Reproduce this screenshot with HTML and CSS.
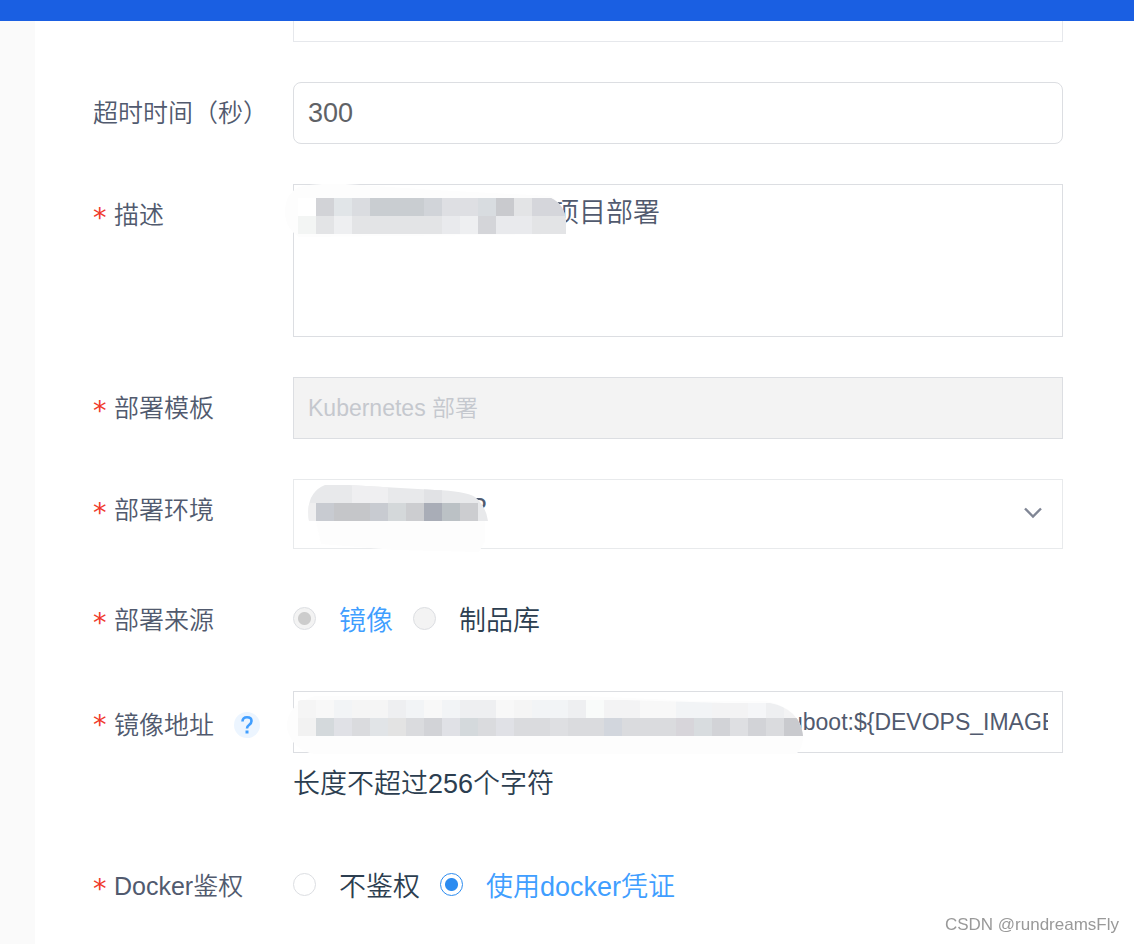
FILE: index.html
```html
<!DOCTYPE html>
<html lang="zh-CN">
<head>
<meta charset="utf-8">
<meta name="viewport" content="width=device-width, initial-scale=1">
<title>部署</title>
<link rel="stylesheet" href="styles.css">
</head>
<body>
<header class="topbar"></header>
<div class="shell">
  <aside class="side"></aside>
  <main class="content">
    <form class="form">
      <div class="cut-field"></div>

      <div class="row">
        <label class="label" for="timeout">超时时间（秒）</label>
        <div class="field"><input class="control rounded" id="timeout" type="text" value="300"></div>
      </div>

      <div class="row">
        <label class="label" for="desc"><span class="star">*</span>描述</label>
        <div class="field">
          <textarea class="control area" id="desc">项目部署</textarea>
          <svg class="mask" width="290" height="60" viewBox="0 0 290 60" aria-hidden="true">
            <clipPath id="c1"><path d="M12 14H266Q279 20 281 36V50H12Z"/></clipPath>
            <path fill="#fdfdfd" d="M14 3Q28 -1 60 0L150 6L266 12Q280 22 281 50L14 53Q0 44 0 28Q0 10 14 3Z"/>
            <g clip-path="url(#c1)" shape-rendering="crispEdges">
              <path fill="#e3e4e6" d="M13 14h270v36h-270z"/>
              <path fill="#fff" d="M13 14h18v18h-18z"/>
              <path fill="#d2d3d7" d="M31 14h18v18h-18z"/>
              <path fill="#e1e5e8" d="M49 14h18v18h-18z"/>
              <path fill="#dadce0" d="M67 14h18v18h-18z"/>
              <path fill="#c9cdd1" d="M85 14h54v18h-54z"/>
              <path fill="#d1d4d9" d="M139 14h18v18h-18z"/>
              <path fill="#dedfe3" d="M157 14h36v18h-36z"/>
              <path fill="#d8dce0" d="M193 14h18v18h-18z"/>
              <path fill="#c9cace" d="M211 14h18v18h-18z"/>
              <path fill="#d5d6db" d="M247 14h36v18h-36z"/>
              <path fill="#f3f5f4" d="M13 32h18v18h-18z"/>
              <path fill="#eeeff1" d="M49 32h18v18h-18zM175 32h18v18h-18z"/>
              <path fill="#e9eaed" d="M157 32h18v18h-18zM211 32h36v18h-36z"/>
              <path fill="#d4d5d9" d="M193 32h18v18h-18z"/>
            </g>
          </svg>
        </div>
      </div>

      <div class="row">
        <label class="label" for="tpl"><span class="star">*</span>部署模板</label>
        <div class="field"><input class="control small" id="tpl" type="text" value="Kubernetes 部署" disabled></div>
      </div>

      <div class="row">
        <label class="label" for="env"><span class="star">*</span>部署环境</label>
        <div class="field">
          <select class="control env" id="env"><option>P</option></select>
          <svg class="chevron" width="18" height="12" viewBox="0 0 18 12" aria-hidden="true"><path d="M1 1.5L9 9.500L17 1.500" fill="none" stroke="#808695" stroke-width="2.400"/></svg>
          <svg class="mask" width="210" height="75" viewBox="0 0 210 75" aria-hidden="true">
            <clipPath id="c2"><path d="M24 42Q20 14 40 6H64L150 11Q180 12 190 18Q201 27 203 42Z"/></clipPath>
            <path fill="#fdfdfd" d="M31 42H200V62L194 73L110 71L36 65Z"/>
            <g clip-path="url(#c2)" shape-rendering="crispEdges">
              <path fill="#e8e9eb" d="M20 4h190v40h-190z"/>
              <path fill="#efeff1" d="M67 4h36v20h-36z"/>
              <path fill="#e1e2e5" d="M139 4h18v20h-18z"/>
              <path fill="#efeff0" d="M20 24h11v18h-11z"/>
              <path fill="#c8cbd1" d="M31 24h18v18h-18zM85 24h18v18h-18z"/>
              <path fill="#c5c6c9" d="M49 24h36v18h-36z"/>
              <path fill="#d4d8da" d="M103 24h18v18h-18z"/>
              <path fill="#cccdd0" d="M121 24h18v18h-18zM175 24h18v18h-18z"/>
              <path fill="#a9adb7" d="M139 24h18v18h-18z"/>
              <path fill="#bbc1c5" d="M157 24h18v18h-18z"/>
            </g>
          </svg>
        </div>
      </div>

      <div class="row">
        <div class="label"><span class="star">*</span>部署来源</div>
        <div class="field radios">
          <label class="option on"><input type="radio" name="source" checked disabled>镜像</label>
          <label class="option"><input type="radio" name="source" disabled>制品库</label>
        </div>
      </div>

      <div class="row">
        <div class="label">
          <label for="image"><span class="star">*</span>镜像地址</label>
          <button class="help" type="button" aria-label="帮助"><svg width="14" height="20" viewBox="0 0 14 20" aria-hidden="true"><path d="M2.500 6.500Q2.500 2.300 7 2.300Q11.500 2.300 11.500 6Q11.500 8 9.300 9.800Q7 11.500 7 13.500" fill="none" stroke="#409eff" stroke-width="2.600"/><path d="M5.500 15.500h3v3h-3z" fill="#409eff"/></svg></button>
        </div>
        <div class="field">
          <input class="control small image" id="image" type="text" value="uboot:${DEVOPS_IMAGE}">
          <svg class="mask" width="520" height="66" viewBox="0 0 520 66" aria-hidden="true">
            <clipPath id="c3"><path d="M13 10L16 9H340L440 12H485Q515 18 518 45H13Z"/></clipPath>
            <path fill="#fdfdfd" d="M30 5H300L410 10H480Q515 16 518 45Q518 58 511 63H30Q8 60 2 38Q0 14 30 5Z"/>
            <g clip-path="url(#c3)" shape-rendering="crispEdges">
              <path fill="#f5f5f5" d="M13 9h18v18h-18zM67 9h36v18h-36zM229 9h18v18h-18z"/>
              <path fill="#f8f8f8" d="M31 9h18v18h-18zM139 9h18v18h-18zM211 9h18v18h-18zM355 9h36v18h-36z"/>
              <path fill="#f2f4f6" d="M49 9h18v18h-18zM121 9h18v18h-18zM157 9h18v18h-18zM247 9h36v18h-36zM391 9h36v18h-36z"/>
              <path fill="#eeeff1" d="M103 9h18v18h-18zM175 9h36v18h-36zM283 9h18v18h-18zM481 9h18v18h-18z"/>
              <path fill="#f9fbfa" d="M301 9h18v18h-18z"/>
              <path fill="#f3f3f4" d="M319 9h36v18h-36zM427 9h36v18h-36zM499 9h20v18h-20z"/>
              <path fill="#f5f6f8" d="M463 9h18v18h-18z"/>
              <path fill="#f2f2f2" d="M13 27h18v18h-18z"/>
              <path fill="#dadbde" d="M49 27h470v18h-470z"/>
              <path fill="#d4d9dc" d="M31 27h18v18h-18zM175 27h18v18h-18z"/>
              <path fill="#e0e1e6" d="M49 27h18v18h-18zM157 27h18v18h-18zM211 27h18v18h-18z"/>
              <path fill="#e1e4e7" d="M85 27h18v18h-18z"/>
              <path fill="#e3e3e3" d="M103 27h18v18h-18z"/>
              <path fill="#d2d3d7" d="M139 27h18v18h-18zM427 27h18v18h-18zM463 27h18v18h-18z"/>
              <path fill="#dedfe2" d="M265 27h18v18h-18zM445 27h18v18h-18z"/>
              <path fill="#d2d6dd" d="M319 27h18v18h-18z"/>
              <path fill="#d7d5da" d="M391 27h18v18h-18z"/>
              <path fill="#d8dcdf" d="M409 27h18v18h-18z"/>
              <path fill="#c9cace" d="M499 27h20v18h-20z"/>
            </g>
          </svg>
          <p class="hint">长度不超过256个字符</p>
        </div>
      </div>

      <div class="row">
        <div class="label"><span class="star">*</span>Docker鉴权</div>
        <div class="field radios">
          <label class="option"><input type="radio" name="auth">不鉴权</label>
          <label class="option on"><input type="radio" name="auth" checked>使用docker凭证</label>
        </div>
      </div>
    </form>
  </main>
</div>
<div class="watermark">CSDN @rundreamsFly</div>
</body>
</html>
```
FILE: styles.css
```css
* { box-sizing: border-box; }

body {
  margin: 0;
  min-height: 100vh;
  display: flex;
  flex-direction: column;
  background: #fff;
  color: #2c3e50;
  font-family: "Liberation Sans", "Noto Sans CJK SC", sans-serif;
  font-size: 27px;
  font-weight: 350;
}

.topbar { height: 21px; background: #1a5fe2; }

.shell { display: flex; flex: 1; }
.side { width: 35px; background: #fafafa; }
.content { flex: 1; padding: 0 71px 0 58px; }

.form { display: flex; flex-direction: column; gap: 40px; }

.cut-field {
  height: 21px;
  margin-left: 200px;
  border: 1px solid #e6e8ec;
  border-top: 0;
}

.row { display: grid; grid-template-columns: 200px 1fr; }

.label {
  display: flex;
  align-items: center;
  height: 62px;
  padding-bottom: 4px;
  color: #515a6e;
  font-size: 25px;
  white-space: nowrap;
}

.star {
  display: inline-block;
  width: 21px;
  color: #f0392b;
  font-family: "DejaVu Sans", sans-serif;
  font-size: 27px;
  font-weight: 400;
  line-height: 30px;
  padding-top: 10px;
}

.field { position: relative; }

.control {
  display: block;
  width: 100%;
  height: 62px;
  margin: 0;
  padding: 0 14px;
  border: 1px solid #dcdee2;
  border-radius: 0;
  background: #fff;
  color: #606266;
  font: inherit;
  outline: 0;
}

.rounded { border-radius: 8px; }
.small { font-size: 23px; color: #515a6e; }
.control:disabled { padding-bottom: 4px; background: #f3f3f3; color: #c5c8ce; }

.area {
  height: 153px;
  padding-top: 8px;
  line-height: 40px;
  color: #515a6e;
  text-indent: 244px;
  resize: none;
}

.env {
  height: 70px;
  padding-bottom: 12px;
  border-color: #e8eaec;
  color: #515a6e;
  appearance: none;
  text-indent: 161px;
}

.image { text-indent: 482px; }

.chevron { position: absolute; right: 21px; top: 28px; }
.mask { position: absolute; left: -8px; top: 0; }

.radios { display: flex; align-items: center; gap: 20px; padding-bottom: 4px; }
.option { display: flex; align-items: center; gap: 23px; }
.on { color: #409eff; }

.option input {
  appearance: none;
  width: 23px;
  height: 23px;
  margin: 0;
  border: 1px solid #dcdee2;
  border-radius: 50%;
  background: #fff;
}
.option input:checked {
  border-color: #2d8cf0;
  background: radial-gradient(circle, #2d8cf0 6px, #fff 7px);
}
.option input:disabled { border-color: #dcdee2; background: #f3f3f3; }
.option input:disabled:checked { background: radial-gradient(circle, #ccc 6px, #f3f3f3 7px); }

.help {
  display: flex;
  align-items: center;
  justify-content: center;
  width: 26px;
  height: 26px;
  margin: 10px 0 0 20px;
  padding: 0;
  border: 0;
  border-radius: 50%;
  background: #ecf5ff;
}

.hint { margin: 0; line-height: 62px; }

.watermark {
  position: fixed;
  right: 15px;
  bottom: 9px;
  color: #999;
  font-size: 17px;
  line-height: 20px;
}
```
